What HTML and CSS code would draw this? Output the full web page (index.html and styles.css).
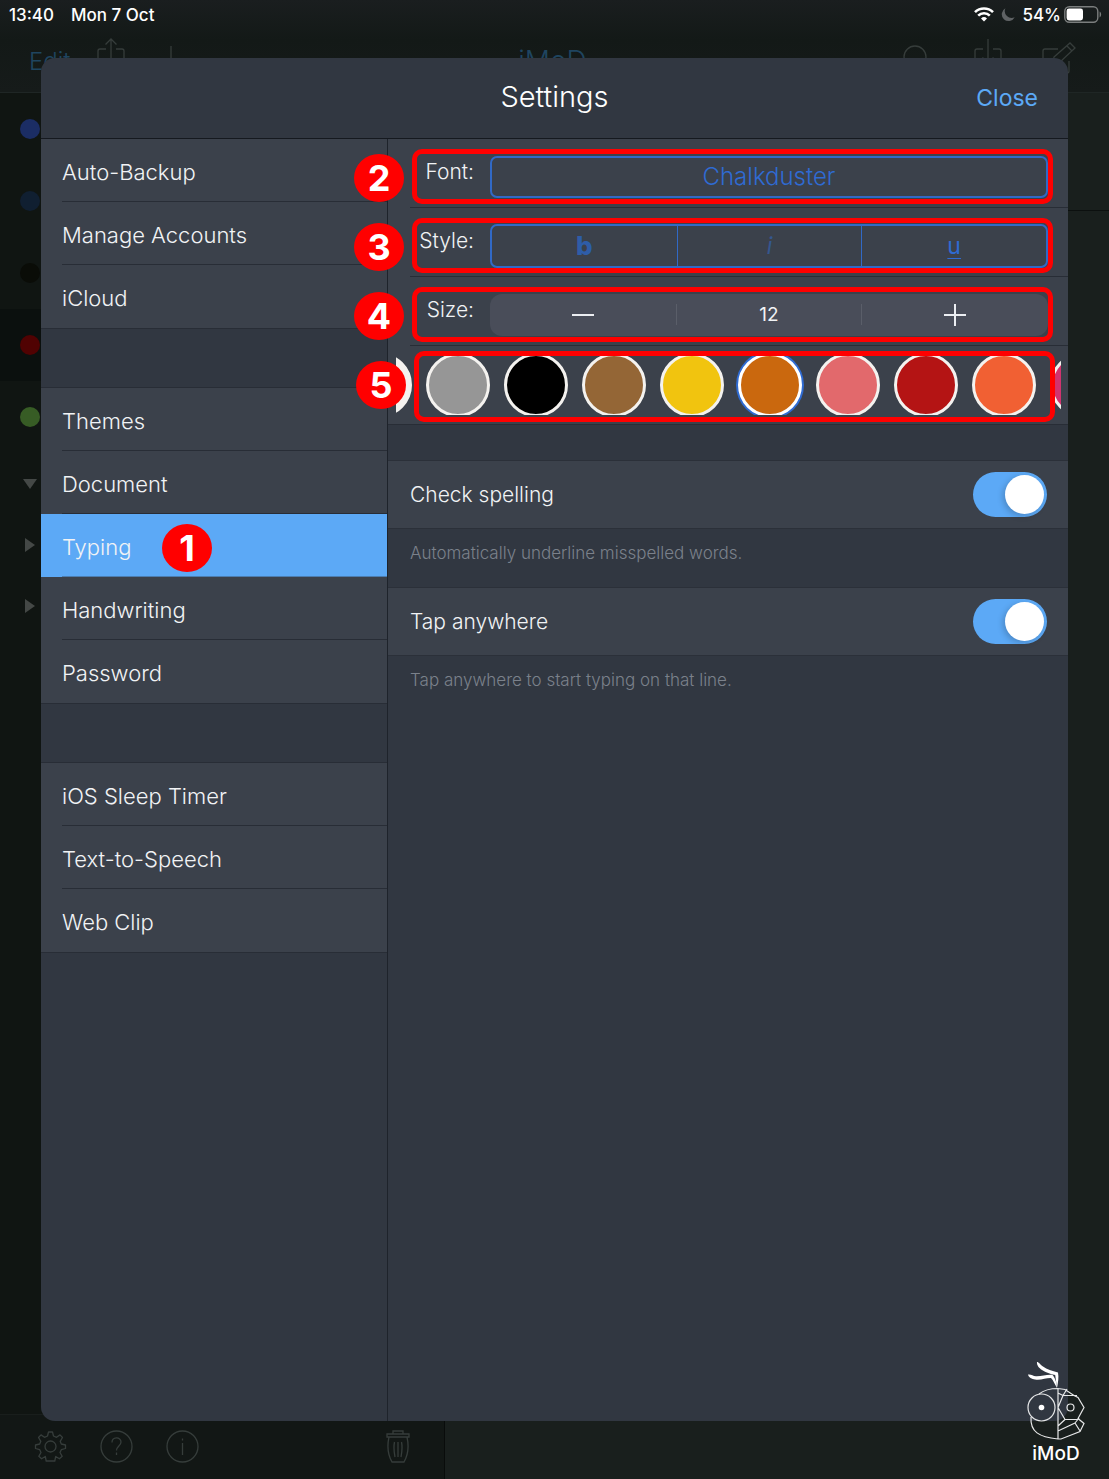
FILE: index.html
```html
<!DOCTYPE html>
<html lang="en">
<head>
  <meta charset="UTF-8" />
  <meta name="viewport" content="width=device-width, initial-scale=1" />
  <title>Settings</title>
  <link rel="stylesheet" href="styles.css">
</head>
<body>
  <!-- Dimmed app behind the dialog -->
  <div class="app">
    <header class="topbar">
      <div class="status">
        <span>13:40</span>
        <span class="date">Mon 7 Oct</span>
        <div class="status-right">
          <svg width="20" height="15" viewBox="0 0 20 15" fill="none" stroke="#fff" stroke-width="2.6"><path d="M1 5.2a12.8 12.8 0 0 1 18 0M4.2 8.6a8.2 8.2 0 0 1 11.6 0"/><path d="M10 14.6l-3-3.1a4.3 4.3 0 0 1 6 0z" fill="#fff" stroke="none"/></svg>
          <svg width="14" height="14" viewBox="0 0 14 14"><path d="M4.4.3a6.8 6.8 0 1 0 9.3 9A6.9 6.900 0 0 1 4.400.3z" fill="#5f6264"/></svg>
          <span>54%</span>
          <svg class="battery" width="38" height="17" viewBox="0 0 38 17"><rect x=".8" y=".8" width="33" height="15.4" rx="4.5" fill="none" stroke="#7b7e7e" stroke-width="1.4"/><rect x="2.6" y="2.6" width="16.4" height="11.8" rx="2.4" fill="#fff"/><path d="M35.6 5.6v5.8c2-.8 2-5 0-5.8z" fill="#7b7e7e"/></svg>
        </div>
      </div>
      <nav class="nav">
        <div class="nav-left">
          <a href="#" class="edit">Edit</a>
          <svg width="28" height="40" viewBox="0 0 28 40"><path d="M9 12H3a2 2 0 0 0-2 2v20a2 2 0 0 0 2 2h22a2 2 0 0 0 2-2V14a2 2 0 0 0-2-2h-6M14 27V2M8.500 7.500L14 2l5.500 5.500"/></svg>
          <svg width="28" height="40" viewBox="0 0 28 40"><path d="M14 9v28M0 23h28"/></svg>
        </div>
        <span class="nav-title">iMoD</span>
        <div class="nav-right">
          <svg width="32" height="40" viewBox="0 0 32 40"><circle cx="13" cy="20" r="11"/><path d="M21 28l8 8"/></svg>
          <svg width="28" height="40" viewBox="0 0 28 40"><path d="M9 12H3a2 2 0 0 0-2 2v20a2 2 0 0 0 2 2h22a2 2 0 0 0 2-2V14a2 2 0 0 0-2-2h-6M14 2v25M8.500 20.500L14 27l5.500-6.500"/></svg>
          <svg width="34" height="40" viewBox="0 0 34 40"><path d="M16 12H3a2 2 0 0 0-2 2v20a2 2 0 0 0 2 2h22a2 2 0 0 0 2-2V24M12 20L28 6l5 5-16 15-7 2zM25 9l5 5"/></svg>
        </div>
      </nav>
    </header>

    <div class="app-body">
      <div class="notebooks">
        <ul class="tags">
          <li><span class="dot blue"></span></li>
          <li><span class="dot navy"></span></li>
          <li><span class="dot dark"></span></li>
          <li class="current"><span class="dot red"></span></li>
          <li><span class="dot green"></span></li>
        </ul>
        <ul class="folders">
          <li><svg width="14" height="14" viewBox="0 0 14 14"><path d="M0 2h14L7 12z"/></svg></li>
          <li><svg width="14" height="14" viewBox="0 0 14 14"><path d="M2 0v14l10-7z"/></svg></li>
          <li><svg width="14" height="14" viewBox="0 0 14 14"><path d="M2 0v14l10-7z"/></svg></li>
        </ul>
        <footer class="toolbar">
          <svg width="33" height="33" viewBox="-16.500 -16.500 33 33"><path d="M-3-10.500L-2-14.500H2L3-10.500 6-9.200 9.500-11.600 12-9 9.700-5.200 10.800-2.500 15-1.500V2L10.800 3.200 9.500 6 11.700 9.800 8.900 12.300 5.200 10 4.300 14.500H-4.300L-5.200 10-8.900 12.300-11.700 9.800-9.500 6-10.800 3.200-15 2V-1.500L-10.800-2.500-9.700-5.200-12-9-9.500-11.600-6-9.200z" stroke-linejoin="round"/><circle r="5.500"/></svg>
          <svg width="33" height="33" viewBox="0 0 33 33"><circle cx="16.500" cy="16.500" r="15.500"/><path d="M12 12.500c0-6 9-6 9-.5 0 4-4.500 4-4.500 8.500M16.500 22.500v2.500"/></svg>
          <svg width="33" height="33" viewBox="0 0 33 33"><circle cx="16.500" cy="16.500" r="15.500"/><path d="M16.500 13v12M16.500 8.500v2"/></svg>
          <svg class="trash" width="24" height="33" viewBox="0 0 24 33"><path d="M1 4h22v3H1zM7 4V1h10v3M3 7c-2 9-1 18 3 25h12c4-7 5-16 3-25M8.500 12c-1 5-.5 10 .5 15M12 12v15M15.500 12c1 5 .5 10-.5 15"/></svg>
        </footer>
      </div>
      <div class="notes">
        <div class="notes-head"></div>
      </div>
    </div>
  </div>

  <main class="dialog">
    <header class="dialog-head">
      <h1>Settings</h1>
      <button class="close">Close</button>
    </header>

    <div class="dialog-body">
      <nav class="menu">
        <ul>
          <li><a href="#">Auto-Backup</a></li>
          <li><a href="#">Manage Accounts</a></li>
          <li><a href="#">iCloud</a></li>
        </ul>
        <ul>
          <li><a href="#">Themes</a></li>
          <li><a href="#">Document</a></li>
          <li class="active"><a href="#">Typing</a><span class="badge">1</span></li>
          <li><a href="#">Handwriting</a></li>
          <li><a href="#">Password</a></li>
        </ul>
        <ul>
          <li><a href="#">iOS Sleep Timer</a></li>
          <li><a href="#">Text-to-Speech</a></li>
          <li><a href="#">Web Clip</a></li>
        </ul>
      </nav>

      <section class="panel">
        <div class="row">
          <label for="font">Font:</label>
          <button class="font" id="font">Chalkduster</button>
          <span class="mark"></span>
          <span class="badge">2</span>
        </div>
        <div class="row">
          <span class="label" id="style-label">Style:</span>
          <div class="styles" role="group" aria-labelledby="style-label">
            <button class="bold">b</button>
            <button class="italic">i</button>
            <button class="under">u</button>
          </div>
          <span class="mark"></span>
          <span class="badge">3</span>
        </div>
        <div class="row">
          <label for="size">Size:</label>
          <div class="stepper">
            <button aria-label="Smaller"><svg width="22" height="22" viewBox="0 0 22 22"><path d="M0 11h22"/></svg></button>
            <output id="size">12</output>
            <button aria-label="Larger"><svg width="22" height="22" viewBox="0 0 22 22"><path d="M0 11h22M11 0v22"/></svg></button>
          </div>
          <span class="mark"></span>
          <span class="badge">4</span>
        </div>
        <div class="row colors">
          <div class="swatches">
            <input type="radio" name="color" class="white" aria-label="White">
            <input type="radio" name="color" class="gray" aria-label="Gray">
            <input type="radio" name="color" class="black" aria-label="Black">
            <input type="radio" name="color" class="brown" aria-label="Brown">
            <input type="radio" name="color" class="yellow" aria-label="Yellow">
            <input type="radio" name="color" class="amber" aria-label="Amber" checked>
            <input type="radio" name="color" class="rose" aria-label="Rose">
            <input type="radio" name="color" class="crimson" aria-label="Crimson">
            <input type="radio" name="color" class="orange" aria-label="Orange">
            <input type="radio" name="color" class="magenta" aria-label="Magenta">
          </div>
          <span class="mark"></span>
          <span class="badge">5</span>
        </div>

        <div class="option first">
          <label for="spelling">Check spelling</label>
          <input type="checkbox" class="switch" id="spelling" checked>
        </div>
        <p class="hint">Automatically underline misspelled words.</p>
        <div class="option">
          <label for="tap">Tap anywhere</label>
          <input type="checkbox" class="switch" id="tap" checked>
        </div>
        <p class="hint">Tap anywhere to start typing on that line.</p>
      </section>
    </div>
  </main>

  <div class="watermark">
    <svg width="58" height="82" viewBox="0 0 58 82" fill="none" stroke="#e6e7e8" stroke-width="1.200">
      <path d="M10 1c2 0 3 2.500 6 4.500 4 3 9 4.500 15 6 1 5 0 10-1 15.500l-1.800-13c-5-1-9.200-2.500-13.200-5-3-2-5.500-5-5-8z" fill="#fff" stroke="none"/>
      <path d="M1 13.500c3-.5 5 1.500 8 1.800 6 .2 11-2 16.500-1.300 2 2 4 6 4.500 13-2.500-4-3.500-7.500-6-10-5-.2-10 2.500-16 1.500-3-.5-6.500-2-7-5z" fill="#fff" stroke="none"/>
      <circle cx="14.500" cy="46.500" r="13.500"/>
      <circle cx="14.500" cy="46.500" r="2.800" fill="#fff" stroke="none"/>
      <path d="M12 33c5-4 11-5.500 19-5.500v50.500M4 56c-1 15 8 20 27 22M31 27.500l7 1 9 6 4 2 6 10-6 11 6 5-4 8-19 7.500-3 0M36 34.500h14M40 28l-4 6.500-5 12 7 12h13M31 70l17-8 5 8M31 65l7-6.500M48 62l4-5M31 32l5 2.500"/>
      <circle cx="43.500" cy="46.500" r="3.500"/>
    </svg>
    <span>iMoD</span>
  </div>
</body>
</html>
```
FILE: styles.css
```css
* {
  box-sizing: border-box;
}
body {
  margin: 0;
  min-height: 100vh;
  position: relative;
  overflow: hidden;
  font-family: Inter, "Liberation Sans", sans-serif;
  background: #191f1d;
  color: #f1f3f5;
}
ul {
  list-style: none;
  margin: 0;
  padding: 0;
}
a {
  color: inherit;
  text-decoration: none;
}
button {
  margin: 0;
  padding: 0;
  border: none;
  background: none;
  color: inherit;
  font: inherit;
  cursor: pointer;
}
svg {
  display: block;
}

/* app in the background */
.app {
  display: flex;
  flex-direction: column;
  height: 100vh;
}
.topbar {
  height: 93px;
  background: linear-gradient(#1a1e1f, #131917 40px, #161b1a);
  border-bottom: 1px solid #1f2625;
}
.status {
  display: flex;
  align-items: center;
  height: 29px;
  padding: 0 7px 0 9px;
  font-size: 17px;
  font-weight: 500;
  color: #fff;
}
.date {
  margin-left: 17px;
}
.status-right {
  display: flex;
  align-items: center;
  gap: 7px;
  margin-left: auto;
}
.battery {
  margin-left: -4px;
}
.nav {
  display: grid;
  grid-template-columns: 1fr auto 1fr;
  align-items: center;
  height: 64px;
  padding: 0 33px 0 29px;
}
.nav svg,
.toolbar svg {
  fill: none;
  stroke: #363d3b;
  stroke-width: 1.3;
}
.nav svg {
  margin-bottom: 8px;
}
.nav-left {
  display: flex;
  align-items: center;
  gap: 32px;
}
.nav-right {
  display: flex;
  align-items: center;
  justify-content: flex-end;
  gap: 40px;
}
.edit,
.nav-title {
  color: #1f4560;
  font-size: 24px;
  font-weight: 300;
}
.edit {
  margin-right: -6px;
}
.nav-title {
  font-size: 28px;
}
.app-body {
  display: flex;
  flex: 1;
}
.notebooks {
  display: flex;
  flex-direction: column;
  width: 445px;
  background: #101512;
  border-right: 1px solid #090c0b;
}
.tags li,
.folders li {
  display: flex;
  align-items: center;
  height: 72px;
  padding-left: 20px;
}
.tags .current {
  background: #0b100e;
}
.folders li {
  height: 61px;
  padding-left: 23px;
}
.folders svg {
  fill: #444846;
}
.dot {
  width: 20px;
  height: 20px;
  border-radius: 50%;
}
.dot.blue { background: #1b2d64; }
.dot.navy { background: #101f31; }
.dot.dark { background: #0a0c07; }
.dot.red { background: #500202; }
.dot.green { background: #375c25; }
.toolbar {
  display: flex;
  align-items: center;
  gap: 33px;
  height: 65px;
  margin-top: auto;
  padding: 0 34px 2px;
  background: #121715;
  border-top: 1px solid #191e1c;
}
.toolbar .trash {
  margin-left: auto;
}
.notes {
  flex: 1;
  background: #191f1d;
}
.notes-head {
  height: 118px;
  border-bottom: 1px solid #0c100f;
}

/* settings dialog */
.dialog {
  position: absolute;
  inset: 58px 41px;
  display: flex;
  flex-direction: column;
  overflow: hidden;
  background: #313741;
  border-radius: 14px;
}
.dialog-head {
  display: grid;
  grid-template-columns: 1fr auto 1fr;
  align-items: center;
  height: 81px;
  padding: 0 30px;
  border-bottom: 1px solid #15191f;
}
.dialog-head h1 {
  grid-column: 2;
  margin: 0;
  padding-bottom: 4px;
  font-size: 29px;
  font-weight: 300;
  color: #fff;
}
.close {
  justify-self: end;
  font-size: 23px;
  color: #5ca9f6;
}
.dialog-body {
  display: flex;
  flex: 1;
}
.menu {
  width: 347px;
  border-right: 1px solid #1e232b;
}
.menu ul {
  margin-bottom: 58px;
  background: #3b414b;
  border-top: 1px solid #282d36;
  border-bottom: 1px solid #282d36;
}
.menu ul:first-child {
  border-top: none;
}
.menu li {
  position: relative;
  height: 63px;
  padding-left: 21px;
}
.menu a {
  display: flex;
  align-items: center;
  height: 63px;
  padding-top: 4px;
  border-bottom: 1px solid #282d36;
  font-size: 22px;
  font-weight: 300;
}
.menu li:last-child a {
  border-bottom-color: transparent;
}
.menu .active {
  background: #5ca9f6;
}
.menu .active a {
  border-bottom-color: #4c7db0;
}
.panel {
  flex: 1;
}
.row {
  position: relative;
  display: flex;
  align-items: center;
  gap: 16px;
  height: 69px;
  padding: 6px 20px 0 22px;
  background: #3b414b linear-gradient(#282d36, #282d36) 22px 100% / 100% 1px no-repeat;
}
.row > label,
.label {
  width: 64px;
  padding-bottom: 10px;
  text-align: right;
  font-size: 21px;
  font-weight: 300;
}
.font,
.styles,
.stepper {
  flex: 1;
  height: 42px;
  border-radius: 7px;
}
.font {
  border: 2px solid #3169c6;
  color: #2f6bd3;
  font-size: 24px;
  font-weight: 300;
}
.styles {
  display: grid;
  grid-template-columns: repeat(3, 1fr);
  height: 44px;
  border: 2px solid #3169c6;
  color: #2f6bd3;
  font-size: 23px;
}
.styles button + button {
  border-left: 1px solid #3169c6;
}
.bold {
  font-size: 26px;
  font-weight: 800;
  color: #2e5da8;
}
.italic {
  font-style: italic;
  color: #35578f;
}
.under {
  text-decoration: underline 1px;
  text-underline-offset: 4px;
}
.stepper {
  display: grid;
  grid-template-columns: repeat(3, 1fr);
  align-items: center;
  border-radius: 12px;
  background: #494d59;
}
.stepper button {
  display: flex;
  justify-content: center;
}
.stepper svg {
  fill: none;
  stroke: #eceef2;
  stroke-width: 2;
}
.stepper output {
  border-left: 1px solid #5a5e69;
  border-right: 1px solid #5a5e69;
  text-align: center;
  font-size: 19px;
  line-height: 21px;
}
.colors {
  height: 79px;
  padding: 0 7px 0 8px;
  background: #3b414b;
  border-bottom: 1px solid #282d36;
}
.swatches {
  display: flex;
  align-items: center;
  gap: 14px;
  flex: 1;
  width: 0;
  height: 60px;
  overflow: hidden;
}
.swatches input {
  appearance: none;
  flex: none;
  width: 64px;
  height: 64px;
  margin: 0;
  border: 3px solid #f4f2ef;
  border-radius: 50%;
}
.swatches input:checked {
  border-color: #fff;
  box-shadow: 0 0 0 2px #2f6bd3;
}
.swatches .white {
  margin-left: -48px;
  background: #f4f2ef;
}
.swatches .gray { background: #969696; }
.swatches .black { background: #000; }
.swatches .brown { background: #946636; }
.swatches .yellow { background: #f1c40f; }
.swatches .amber { background: #ca680e; }
.swatches .rose { background: #e2696c; }
.swatches .crimson { background: #b41414; }
.swatches .orange { background: #f16033; }
.swatches .magenta { background: #d1336f; }

/* numbered callouts */
.mark {
  position: absolute;
  inset: 10px 15px 4px 24px;
  border: 5px solid #f00;
  border-radius: 10px;
  pointer-events: none;
}
.colors .mark {
  inset: 5px 13px 2px 26px;
}
.badge {
  position: absolute;
  top: 15px;
  left: -34px;
  width: 50px;
  height: 48px;
  border-radius: 50%;
  background: #f00;
  color: #fff;
  font-size: 36px;
  font-weight: 700;
  line-height: 48px;
  text-align: center;
}
.colors .badge {
  left: -32px;
}
.menu .badge {
  top: 10px;
  left: 121px;
}

.option {
  display: flex;
  align-items: center;
  justify-content: space-between;
  height: 69px;
  padding: 0 21px 0 22px;
  background: #3b414b;
  border-top: 1px solid #2b3039;
  border-bottom: 1px solid #2b3039;
  font-size: 21px;
  font-weight: 300;
}
.option.first {
  margin-top: 35px;
}
.switch {
  appearance: none;
  width: 74px;
  height: 45px;
  margin: 0;
  padding: 3px;
  border-radius: 23px;
  background: #5ca9f6;
  cursor: pointer;
}
.switch::before {
  content: "";
  display: block;
  width: 39px;
  height: 39px;
  margin-left: auto;
  border-radius: 50%;
  background: #fff;
  box-shadow: -2px 2px 6px rgba(0,0,0,0.2);
}
.hint {
  height: 58px;
  margin: 0;
  padding: 11px 22px;
  color: #7b818b;
  font-size: 17px;
  font-weight: 300;
  line-height: 26px;
}

.watermark {
  position: absolute;
  right: 24px;
  bottom: 14px;
  display: flex;
  flex-direction: column;
  align-items: center;
  color: #fff;
  font-size: 19px;
  font-weight: 500;
  line-height: 22px;
}
```
